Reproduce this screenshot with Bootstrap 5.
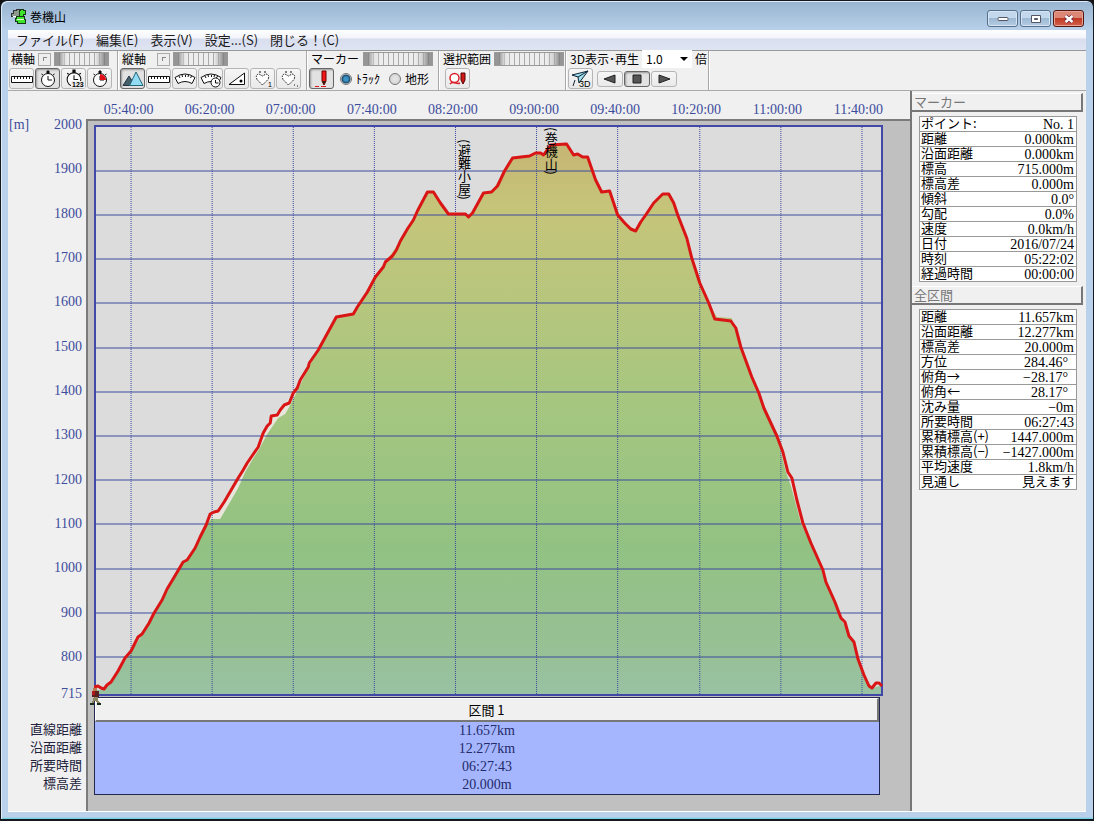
<!DOCTYPE html>
<html lang="ja">
<head>
<meta charset="utf-8">
<meta name="viewport" content="width=device-width, initial-scale=1">
<title>巻機山</title>
<link href="https://cdn.jsdelivr.net/npm/bootstrap@5.3.0/dist/css/bootstrap.min.css" rel="stylesheet">
<style>
:root { --ink: #3c4c9c; --face: #f0f0f0; }
body { font-family: "Liberation Sans", "Noto Sans CJK JP", sans-serif; font-size: 12px; line-height: 16px; color: #000; background: #111; }
.app-window { min-height: 100vh; border: 1px solid #15181f; border-bottom-width: 2px; border-radius: 7px 7px 0 0; padding: 0 7px 7px;
  background: linear-gradient(#98b4d0 0, #b9d1ea 30px, #b9d1ea calc(100% - 2px), #5fd0e4 100%); box-shadow: inset 1px 1px 0 #dcecf8; }
.title-bar { height: 29px; padding: 0 2px; }
.title-bar h1 { font: 12px/16px "Noto Sans CJK JP", sans-serif; padding-left: 4px; padding-top: 2px; }
.win-btn { width: 31px; height: 17px; padding: 0; border: 1px solid #56708c; border-radius: 3px; box-shadow: inset 0 0 0 1px #d5e5f3;
  background: linear-gradient(#c3d8ec 50%, #9db8d2 50%, #b4cde4); }
.win-btn.close-btn { border-color: #571510; box-shadow: inset 0 0 0 1px #e4a497; background: linear-gradient(#dc8775 50%, #bf3a24 50%, #d2604a); }
.win-set { gap: 2px; padding-top: 6px; }
.menu-strip { height: 20px; background: linear-gradient(#fff, #f2f4fa 40%, #dadff0 45%, #dfe4f3); }
.menu-strip a { color: #1a1a1a; text-decoration: none; font: 13px/20px "Noto Sans CJK JP", sans-serif; margin-right: 12px; }
.tool-strip { height: 41px; background: var(--face); border-top: 1px solid #999; border-bottom: 1px solid #aaa; font-family: "Liberation Sans Narrow", "Noto Sans CJK JP", sans-serif; }
.tool-group { border-right: 1px solid #a8a8a8; box-shadow: 1px 0 #fff; padding: 0 1px; margin-right: 1px; }
.tool-group.wide-end { padding-right: 4px; }
.tool-head { height: 16px; gap: 3px; padding-left: 2px; white-space: nowrap; }
.tool-row { height: 23px; }
.tool-row label { margin-right: 4px; }
.tool-btn { width: 25px; height: 21px; margin-right: 1px; padding: 0; border: 1px solid #b5b5b5; border-radius: 3px; background: linear-gradient(#f6f6f6, #e9e9e9); display: flex; align-items: center; justify-content: center; }
.tool-btn.pressed { border-color: #666; background: #e2e2e2; box-shadow: inset 1px 1px 2px #999; }
.tool-btn.play-btn { width: 26px; height: 16px; }
.dial { height: 14px; border: 1px solid #999; padding: 0; border-radius: 0;
  background: linear-gradient(90deg, rgba(120,120,120,.75) 4px, rgba(220,220,220,.5) 10px, rgba(245,245,245,0) 25%, rgba(245,245,245,0) 75%, rgba(190,190,190,.5) calc(100% - 10px), rgba(120,120,120,.75) calc(100% - 4px)), repeating-linear-gradient(90deg, #ededed 0 4px, #aaa 4px 5px); }
.dial-s { width: 55px; } .dial-l { width: 70px; }
.knob { width: 13px; height: 13px; padding: 0; border: 1px solid #aaa; background: #eee; display: flex; align-items: center; justify-content: center; }
.knob span { width: 4px; height: 4px; border-top: 1px solid #888; border-left: 1px solid #888; }
.tool-radio { width: 12px; height: 12px; margin: 0 4px 0 5px; appearance: none; border: 1px solid #777; border-radius: 50%; background: radial-gradient(#e8e8e8, #cfcfcf); }
.tool-radio:checked { background: radial-gradient(#3b93c4 0 2px, #1a4668 4px, #e4e4e4 5px); }
.speed-select { appearance: none; border: 0; border-radius: 0; width: 50px; height: 18px; padding: 0 4px; font-size: 12px; line-height: 16px;
  background: #fff url("data:image/svg+xml,%3Csvg xmlns='http://www.w3.org/2000/svg' viewBox='0 0 8 4'%3E%3Cpath d='M0 0h8L4 4z'/%3E%3C/svg%3E") no-repeat right 4px center / 8px 4px; }
.work-area { background: var(--face); border-bottom: 1px solid #fff; }
.num { font-family: "Liberation Serif", "Noto Sans CJK JP", serif; font-size: 14px; }
.time-axis { height: 26px; padding: 11px 11px 0 80px; color: var(--ink); line-height: 15px; }
.time-axis span { flex: 1 1 0; text-align: center; white-space: nowrap; }
.gutter { width: 78px; padding: 0 4px 19px 1px; }
.level-axis { color: var(--ink); flex: 1 1 0; }
.level-axis div { flex: 1 1 0; text-align: right; }
.level-axis .near-end { flex-grow: .83; }
.level-axis .last { flex: 0 0 16px; }
.gutter-names { padding-top: 18px; font: 13px/18px "Noto Sans CJK JP", sans-serif; color: #22223c; text-align: right; }
.canvas-bed { background: #c0c0c0; border-left: 2px solid #7b7b7b; border-top: 2px solid #7b7b7b; margin-top: 2px; padding: 4px 27px 16px 6px; }
.plot-svg { flex: 1 1 0; min-height: 0; width: 100%; display: block; }
.plot-svg * { vector-effect: non-scaling-stroke; }
.place-tag { position: absolute; writing-mode: vertical-rl; font: 13px/14px "Noto Sans CJK JP", sans-serif; white-space: nowrap; }
.hiker { position: absolute; left: -5px; bottom: -10px; }
.section-table { margin: 1px 0 0; width: calc(100% - 3px); border-collapse: separate; border-spacing: 0; border: 1px solid #232850; background: #a5b6ff; color: #232a68; text-align: center; }
.section-table th { height: 24px; padding: 0; font: 13px/20px "Liberation Sans Narrow", "Noto Sans CJK JP", sans-serif; color: #000; background: var(--face); border: 1px solid #fff; border-right: 2px solid #777; border-bottom: 2px solid #777; }
.section-table td { padding: 0; line-height: 18px; }
.side-pane { width: 176px; border-left: 2px solid #777; padding: 2px 3px 0 0; }
.pane-title { font: 13px/14px "Noto Sans CJK JP", sans-serif; color: #777; padding: 1px 2px; margin: 0; height: 19px; border-top: 1px solid #fff; border-right: 2px solid #777; border-bottom: 2px solid #777; }
.fact-table { margin: 4px 6px 4px 7px; width: calc(100% - 13px); border-collapse: collapse; background: #fff; }
.fact-table tr { border: 1px solid #999; height: 15px; }
.fact-table th { font: 13px/12px "Noto Sans CJK JP", sans-serif; padding: 0 1px 2px; white-space: nowrap; }
.fact-table td { padding: 2px 2px 0; text-align: right; line-height: 12px; white-space: nowrap; }
.fact-table td.deg { padding-right: 8px; }
.fact-table td.words { font: 13px/12px "Noto Sans CJK JP", sans-serif; padding: 0 2px 2px; }
</style>
</head>
<body>
<div class="app-window d-flex flex-column">
  <header class="title-bar d-flex align-items-center">
    <svg width="16" height="18" viewBox="0 0 16 18" shape-rendering="crispEdges"><path d="M1 6h2V3h3V2h3v3h4v3H9v2H6V9H1z" fill="#8f9a8f" stroke="#333"/><path d="M9 3h1V2h3v1h2v4h-2v2H9z" fill="#3fe32c" stroke="#173b17"/><path d="M6 9h8v3h1v4H7v-2H5v-3h1z" fill="#3fe32c" stroke="#143814"/><path d="M7 12.500h7" stroke="#e4ffd0"/><path d="M3 9.500h3" stroke="#fff"/></svg>
    <h1 class="mb-0 flex-fill">巻機山</h1>
    <div class="win-set d-flex">
      <button class="win-btn d-flex align-items-center justify-content-center" aria-label="最小化"><svg width="12" height="6"><rect x="1" y="1.500" width="10" height="3" rx="1" fill="#fff" stroke="#556"/></svg></button>
      <button class="win-btn d-flex align-items-center justify-content-center" aria-label="最大化"><svg width="12" height="10"><path d="M1.500 1.500h9v7h-9z" fill="#fff" stroke="#556"/><path d="M4.500 4.500h3v1h-3z" fill="#89a" stroke="#556"/></svg></button>
      <button class="win-btn close-btn d-flex align-items-center justify-content-center" aria-label="閉じる"><svg width="12" height="10"><path d="M2.500 2l7 6m0-6l-7 6" stroke="#624" stroke-width="4"/><path d="M2.500 2l7 6m0-6l-7 6" stroke="#fff" stroke-width="2.500"/></svg></button>
    </div>
  </header>
  <nav class="menu-strip d-flex ps-2">
    <a href="#">ファイル(F)</a><a href="#">編集(E)</a><a href="#">表示(V)</a><a href="#">設定...(S)</a><a href="#">閉じる！(C)</a>
  </nav>
  <div class="tool-strip d-flex">
    <div class="tool-group wide-end">
      <div class="tool-head d-flex align-items-center"><span>横軸</span><button class="knob" aria-label="横軸固定"><span></span></button><button class="dial dial-s" aria-label="横軸倍率"></button></div>
      <div class="tool-row d-flex align-items-center">
        <button class="tool-btn" aria-label="距離"><svg width="22" height="16"><use href="#i-ruler"/></svg></button>
        <button class="tool-btn pressed" aria-label="時刻"><svg width="20" height="18"><use href="#i-clock"/></svg></button>
        <button class="tool-btn" aria-label="番号"><svg width="22" height="19"><use href="#i-clock"/><path d="M8 12h14v7H8z" fill="#eee"/><text x="9" y="18" font-size="7" font-weight="bold" font-family="Liberation Sans">123</text></svg></button>
        <button class="tool-btn" aria-label="経過時間"><svg width="20" height="18"><use href="#i-clock"/><path d="M10 10V4a6 6 0 0 1 6 6z" fill="#e01018"/></svg></button>
      </div>
    </div>
    <div class="tool-group wide-end">
      <div class="tool-head d-flex align-items-center"><span class="pe-2">縦軸</span><button class="knob" aria-label="縦軸固定"><span></span></button><button class="dial dial-s" aria-label="縦軸倍率"></button></div>
      <div class="tool-row d-flex align-items-center">
        <button class="tool-btn pressed" aria-label="標高"><svg width="22" height="17"><path d="M1 15.500L7 6l6 9.500z" fill="#46606a" stroke="#234"/><path d="M7.500 15.500L14 2l7 13.500z" fill="#92dcf4" stroke="#267"/></svg></button>
        <button class="tool-btn" aria-label="距離"><svg width="22" height="16"><use href="#i-ruler"/></svg></button>
        <button class="tool-btn" aria-label="速度"><svg width="22" height="16"><use href="#i-meter"/></svg></button>
        <button class="tool-btn" aria-label="時間速度"><svg width="22" height="18"><use href="#i-meter"/><circle cx="15.500" cy="12.500" r="4.500" fill="#fff" stroke="#111"/><path d="M15.500 10v3h3" fill="none" stroke="#111"/></svg></button>
        <button class="tool-btn" aria-label="勾配"><svg width="20" height="16"><path d="M2 13.500L17.500 2v11.500z" fill="#fff" stroke="#111"/><circle cx="14" cy="10" r="1.500"/></svg></button>
        <button class="tool-btn" aria-label="心拍1"><svg width="20" height="18"><use href="#i-heart"/><text x="15" y="17" font-size="7" font-family="Liberation Sans">1</text></svg></button>
        <button class="tool-btn" aria-label="心拍2"><svg width="20" height="18"><use href="#i-heart"/><path d="M15 15h1m2 1h1" stroke="#111"/></svg></button>
      </div>
    </div>
    <div class="tool-group">
      <div class="tool-head d-flex align-items-center justify-content-between"><span>マーカー</span><button class="dial dial-l me-1" aria-label="マーカー位置"></button></div>
      <div class="tool-row d-flex align-items-center">
        <button class="tool-btn pressed" aria-label="マーカー"><svg width="22" height="18"><path d="M11 1h4v10l-2 4-2-4z" fill="#f01818" stroke="#700"/><path d="M11 11h4l-2 4z" fill="#321"/><path d="M4 16.500h4m2 0h5" stroke="#e01818"/></svg></button>
        <input class="tool-radio" type="radio" name="target" id="track" checked><label for="track">ﾄﾗｯｸ</label>
        <input class="tool-radio" type="radio" name="target" id="land"><label for="land" class="pe-1">地形</label>
      </div>
    </div>
    <div class="tool-group">
      <div class="tool-head d-flex align-items-center"><span>選択範囲</span><button class="dial dial-l" aria-label="選択範囲位置"></button></div>
      <div class="tool-row d-flex align-items-center ps-1">
        <button class="tool-btn" aria-label="範囲マーカー"><svg width="20" height="16"><circle cx="6.500" cy="7" r="4.500" fill="#fff" stroke="#d8202a" stroke-width="1.500"/><path d="M2 13c3-4 6 1 10-1" fill="none" stroke="#d8202a" stroke-width="1.500"/><path d="M13 2h4v7l-2 4-2-4z" fill="#d01818" stroke="#500"/></svg></button>
      </div>
    </div>
    <div class="tool-group">
      <div class="tool-head d-flex align-items-center"><label for="speed">3D表示･再生</label>
        <select id="speed" class="speed-select"><option>1.0</option><option>2.0</option></select><span>倍</span></div>
      <div class="tool-row d-flex align-items-center">
        <button class="tool-btn me-1" aria-label="3D表示"><svg width="22" height="18"><path d="M2 5l16-4-9 12-1-6z" fill="#9fe0ee" stroke="#123"/><path d="M8 7l10-6M5 10l-2 6" stroke="#123"/><text x="9" y="17" font-size="9" font-family="Liberation Sans">3D</text></svg></button>
        <button class="tool-btn play-btn" aria-label="逆再生"><svg width="14" height="10"><path d="M1 5l11-4v8z" fill="#555" stroke="#222"/></svg></button>
        <button class="tool-btn play-btn pressed" aria-label="停止"><svg width="10" height="10"><path d="M1 1h8v8H1z" fill="#555" stroke="#222"/></svg></button>
        <button class="tool-btn play-btn" aria-label="再生"><svg width="14" height="10"><path d="M13 5L2 1v8z" fill="#555" stroke="#222"/></svg></button>
      </div>
    </div>
  </div>

  <main class="work-area d-flex flex-fill">
    <section class="d-flex flex-column flex-fill">
      <div class="time-axis num d-flex"><span>05:40:00</span><span>06:20:00</span><span>07:00:00</span><span>07:40:00</span><span>08:20:00</span><span>09:00:00</span><span>09:40:00</span><span>10:20:00</span><span>11:00:00</span><span>11:40:00</span></div>
      <div class="d-flex flex-fill">
        <div class="gutter d-flex flex-column">
          <div class="level-axis num d-flex flex-column">
            <div class="d-flex justify-content-between"><span>[m]</span><span>2000</span></div><div>1900</div><div>1800</div><div>1700</div><div>1600</div><div>1500</div><div>1400</div><div>1300</div><div>1200</div><div>1100</div><div>1000</div><div>900</div><div class="near-end">800</div><div class="last">715</div>
          </div>
          <div class="gutter-names"><div>直線距離</div><div>沿面距離</div><div>所要時間</div><div>標高差</div></div>
        </div>
        <div class="canvas-bed d-flex flex-column flex-fill">
          <div class="position-relative d-flex flex-column flex-fill">
            <svg class="plot-svg" viewBox="94 125 788 571" preserveAspectRatio="none" role="img" aria-label="標高グラフ">
              <defs><linearGradient id="land-fill" gradientUnits="userSpaceOnUse" x1="0" y1="144" x2="0" y2="696">
                <stop offset="0" stop-color="#c6b574"/><stop offset=".12" stop-color="#c5c57a"/><stop offset=".28" stop-color="#b7c67d"/><stop offset=".5" stop-color="#a3c680"/><stop offset=".73" stop-color="#92c283"/><stop offset=".9" stop-color="#97c093"/><stop offset="1" stop-color="#98c2a3"/></linearGradient></defs>
              <path d="M94 125h788v571H94z" fill="#dcdcdc"/>
              <path fill="#e6e6dc" d="M206 525L214 512 218 511 247 463 263 433 271 416 284 405 294 390V525zM782 452L802 523 800 523z"/>
              <path fill="url(#land-fill)" d="M94 696V690L104 690 111 683 118 672 131 652 142 635 155 614 168 590 183 563 195 549 206 526 211 519 220 519 227 507 238 488 245 472 252 460 259 449 267 434 278 418 285 414 290 405 300 385 309 366 318 351 336 317 353 314 367 292 385 262 400 241 417 211 427 192 433 192 448 214 465 214 468 217 483 193 491 192 512 158 529 156 540 153 543 155 550 145 566 144 573 155 587 157 601 192 609 191 617 215 635 231 645 215 662 194 668 194 677 215 691 258 708 303 716 317 731 318 740 347 758 393 776 436 785 472 790 486 800 523 822 571 840 619 853 643 863 676 871 688 882 685V696z"/>
              <g stroke="#3d4a9c" fill="none" shape-rendering="crispEdges">
                <path d="M94 171H882M94 215H882M94 259H882M94 303H882M94 348H882M94 392H882M94 436H882M94 480H882M94 524H882M94 569H882M94 613H882M94 657H882"/>
                <path stroke-dasharray="1 1" d="M131 127V695M212 127V695M293 127V695M374 127V695M455 127V695M536 127V695M617 127V695M699 127V695M780 127V695M861 127V695"/>
                <path stroke="#4248a8" stroke-width="2" d="M95 126H881V695H95z"/>
              </g>
              <path fill="none" stroke="#d91515" stroke-width="3" stroke-linejoin="round" d="M94 687L98 686 101 688 104 689 107 685 111 682 118 671 125 658 131 651 138 637 142 634 149 623 154 613 162 600 167 589 173 579 183 562 187 560 195 548 200 537 206 525 210 514 214 512 218 511 224 502 231 490 238 478 243 470 247 463 258 447 263 433 267 426 270 423 271 416 277 415 280 410 284 405 289 403 293 393 297 388 300 380 308 367 309 363 318 350 336 317 353 314 357 307 367 292 375 277 383 267 385 262 392 256 396 250 400 241 407 229 413 220 417 211 427 192 433 192 440 203 448 214 465 214 468 217 472 213 483 193 491 192 497 186 504 171 512 158 529 156 535 153 540 153 543 155 550 145 566 144 573 155 577 154 582 157 587 157 595 180 601 192 609 191 617 215 624 223 630 229 635 231 640 222 645 215 653 203 662 194 668 194 673 203 677 215 686 238 691 258 699 283 708 303 714 319 730 321 735 328 740 347 751 377 758 393 763 408 776 436 782 452 787 472 791 478 796 500 802 523 810 543 822 570 825 582 834 602 840 618 844 622 848 636 853 642 857 659 863 675 868 686 871 688 875 683 878 683 881 686"/>
            </svg>
            <span class="place-tag" style="left:46%;top:2.500%">(避難小屋)</span>
            <span class="place-tag" style="left:57%;top:.300%">(巻機山)</span>
            <svg class="hiker" width="13" height="19" viewBox="0 0 13 19" shape-rendering="crispEdges"><path d="M4 1h4v3H4z" fill="#b87850"/><path d="M3 4h7v6H3z" fill="#5a2020"/><path d="M3 4h3v4H3z" fill="#b01818"/><path d="M5 10h4v3l2 3H8l-2-3-1 3H3z" fill="#8a8460"/><path d="M1 16h4v2H1zM8 16h4v2H8z" fill="#182818"/></svg>
          </div>
          <table class="section-table num">
            <thead><tr><th>区間 1</th></tr></thead>
            <tbody><tr><td>11.657km</td></tr><tr><td>12.277km</td></tr><tr><td>06:27:43</td></tr><tr><td>20.000m</td></tr></tbody>
          </table>
        </div>
      </div>
    </section>
    <aside class="side-pane">
      <h2 class="pane-title">マーカー</h2>
      <table class="fact-table num">
        <tr><th>ポイント:</th><td>No. 1</td></tr><tr><th>距離</th><td>0.000km</td></tr><tr><th>沿面距離</th><td>0.000km</td></tr><tr><th>標高</th><td>715.000m</td></tr><tr><th>標高差</th><td>0.000m</td></tr><tr><th>傾斜</th><td>0.0°</td></tr><tr><th>勾配</th><td>0.0%</td></tr><tr><th>速度</th><td>0.0km/h</td></tr><tr><th>日付</th><td>2016/07/24</td></tr><tr><th>時刻</th><td>05:22:02</td></tr><tr><th>経過時間</th><td>00:00:00</td></tr>
      </table>
      <h2 class="pane-title">全区間</h2>
      <table class="fact-table num">
        <tr><th>距離</th><td>11.657km</td></tr><tr><th>沿面距離</th><td>12.277km</td></tr><tr><th>標高差</th><td>20.000m</td></tr><tr><th>方位</th><td class="deg">284.46°</td></tr><tr><th>俯角→</th><td class="deg">−28.17°</td></tr><tr><th>俯角←</th><td class="deg">28.17°</td></tr><tr><th>沈み量</th><td>−0m</td></tr><tr><th>所要時間</th><td>06:27:43</td></tr><tr><th>累積標高(+)</th><td>1447.000m</td></tr><tr><th>累積標高(−)</th><td>−1427.000m</td></tr><tr><th>平均速度</th><td>1.8km/h</td></tr><tr><th>見通し</th><td class="words">見えます</td></tr>
      </table>
    </aside>
  </main>
</div>
<svg width="0" height="0" class="position-absolute" aria-hidden="true">
  <symbol id="i-ruler" viewBox="0 0 22 16"><path d="M.5 5.500h21v6H.5z" fill="#fff" stroke="#111"/><path d="M3.500 6v2m3-2v2m3-2v2m3-2v2m3-2v2m3-2v2" stroke="#111"/></symbol>
  <symbol id="i-clock" viewBox="0 0 20 18"><circle cx="10" cy="10" r="6.500" fill="#fff" stroke="#111"/><path d="M10 6v4h4" fill="none" stroke="#111"/><path d="M9 1h2v2.500H9zM3.500 4l1.500 1M16.500 4L15 5" stroke="#111"/></symbol>
  <symbol id="i-meter" viewBox="0 0 22 16"><path d="M1 6.500Q11-.5 21 6.500L18 12.500Q11 8.500 4 12.500z" fill="#fff" stroke="#111"/><path d="M5 5l1 2m2-3l.5 2m3-2v2m3-2l-.5 2m3.500-1l-1 2" stroke="#111"/></symbol>
  <symbol id="i-heart" viewBox="0 0 20 18"><path d="M9.500 15L4 9.500Q2 4.500 6 4l3.500 2L13 4q4 .5 2 5.500z" fill="#fff" stroke="#111" stroke-dasharray="1.500 1"/><path d="M7 1v2m5-2v2" stroke="#111"/></symbol>
</svg>
<script src="https://cdn.jsdelivr.net/npm/bootstrap@5.3.0/dist/js/bootstrap.bundle.min.js"></script>
</body>
</html>
